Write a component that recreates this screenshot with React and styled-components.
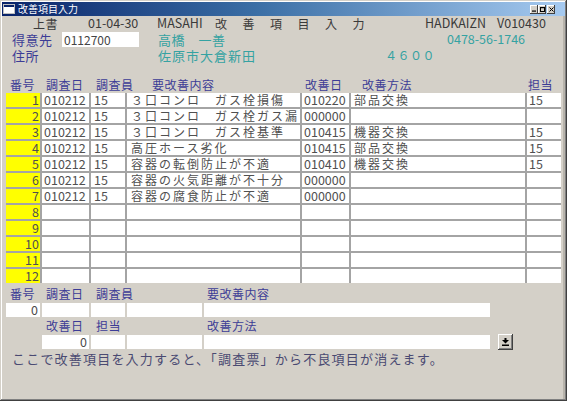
import React from 'react'
import styled, { createGlobalStyle } from 'styled-components'

const GlobalStyle = createGlobalStyle`
  html, body {
    margin: 0;
    padding: 0;
    background: #d4d0c8;
  }
  body {
    font-family: "Noto Sans CJK JP", "Noto Sans", sans-serif;
  }
`

const Window = styled.div`
  width: 567px;
  height: 401px;
  box-sizing: border-box;
  padding: 2px;
  background: #d4d0c8;
  box-shadow: inset -1px -1px #404040, inset 1px 1px #d4d0c8,
    inset -2px -2px #808080, inset 2px 2px #ffffff,
    inset -4px 0 #b8b4ac;
  display: flex;
  flex-direction: column;
  overflow: hidden;
`

const TitleBar = styled.div`
  height: 14px;
  display: flex;
  align-items: center;
  padding: 0 2px 0 1px;
  background: linear-gradient(to right, #0a246a, #3a6ea5 45%, #a6caf0);
`

const TitleText = styled.span`
  color: #fff;
  font-size: 10px;
  line-height: 14px;
  margin-left: 3px;
  flex: 1;
`

const Controls = styled.div`
  display: flex;
  margin-right: 8px;
`

const CtrlButton = styled.div`
  width: 8px;
  height: 9px;
  background: #d4d0c8;
  box-shadow: inset -1px -1px #404040, inset 1px 1px #fff;
  display: flex;
  align-items: center;
  justify-content: center;
  margin-left: ${p => (p.$gap ? 1 : 0)}px;
`

const Body = styled.div`
  padding-left: 4px;
  display: flex;
  flex-direction: column;
`

const HeaderRow = styled.div`
  height: ${p => p.$h}px;
  display: flex;
  align-items: center;
  padding-left: ${p => p.$pl || 0}px;
`

const tones = {
  dark: '#3a3a3a',
  label: '#3c3c96',
  teal: '#35a2a2',
}

const Item = styled.span`
  flex: 0 0 ${p => (p.$w ? `${p.$w}px` : 'auto')};
  color: ${p => tones[p.$tone || 'dark']};
  font-size: ${p => p.$size || 12}px;
  letter-spacing: ${p => p.$ls || 0}px;
  white-space: nowrap;
  line-height: 1;
`

const CodeBox = styled.div`
  flex: 0 0 77px;
  height: 15px;
  margin-right: 19px;
  background: #fff;
  color: #444;
  font-size: 12px;
  line-height: 15px;
  padding-left: 2px;
  box-sizing: border-box;
`

const cols = '34px 47px 34px 173px 47px 174px 34px'

const GridHead = styled.div`
  display: grid;
  grid-template-columns: ${cols};
  column-gap: 2px;
  height: 14px;
  margin-top: 15px;
  align-items: center;
`

const HeadLabel = styled.span`
  color: #3c3c96;
  font-size: 12px;
  letter-spacing: 0.5px;
  line-height: 1;
  padding-left: ${p => p.$pl || 0}px;
  white-space: nowrap;
`

const Grid = styled.div`
  display: grid;
  grid-template-columns: ${cols};
  grid-auto-rows: 14px;
  gap: 2px;
  background: #a4a4a4;
  width: 555px;
  margin-top: 1px;
`

const Cell = styled.div`
  background: ${p => (p.$num ? '#ffff00' : '#ffffff')};
  color: #505050;
  font-size: ${p => (p.$wide ? 12 : 12.5)}px;
  letter-spacing: ${p => (p.$wide ? 2 : 0)}px;
  line-height: 14px;
  text-align: ${p => (p.$num ? 'right' : 'left')};
  padding: 0 ${p => (p.$num ? 1 : 0)}px 0 ${p => p.$pl ?? 2}px;
  white-space: nowrap;
`

const editCols = '34px 47px 34px 75px 286px 22px'

const EditLabels = styled.div`
  display: grid;
  grid-template-columns: ${editCols};
  column-gap: 2px;
  height: 14px;
  align-items: center;
  margin-top: ${p => p.$mt}px;
`

const EditRow = styled.div`
  display: grid;
  grid-template-columns: ${editCols};
  column-gap: 2px;
  height: 14px;
  margin-top: ${p => p.$mt}px;
  align-items: center;
`

const Field = styled.div`
  height: 14px;
  background: ${p => (p.$blank ? 'transparent' : '#fff')};
  color: #4a4a4a;
  font-size: 12.5px;
  line-height: 14px;
  text-align: ${p => (p.$right ? 'right' : 'left')};
  padding-right: 2px;
  box-sizing: border-box;
`

const DropButton = styled.div`
  width: 15px;
  height: 16px;
  margin-left: 6px;
  background: #d4d0c8;
  box-shadow: inset -1px -1px #404040, inset 1px 1px #fff, inset -2px -2px #808080;
  display: flex;
  align-items: center;
  justify-content: center;
`

const Message = styled.div`
  margin-top: 4px;
  padding-left: 6px;
  height: 14px;
  color: #4a4a72;
  font-size: 13px;
  letter-spacing: 1.2px;
  line-height: 14px;
  white-space: nowrap;
`

const rows = [
  ['1', '010212', '15', '３口コンロ　ガス栓損傷', '010220', '部品交換', '15'],
  ['2', '010212', '15', '３口コンロ　ガス栓ガス漏', '000000', '', ''],
  ['3', '010212', '15', '３口コンロ　ガス栓基準', '010415', '機器交換', '15'],
  ['4', '010212', '15', '高圧ホース劣化', '010415', '部品交換', '15'],
  ['5', '010212', '15', '容器の転倒防止が不適', '010410', '機器交換', '15'],
  ['6', '010212', '15', '容器の火気距離が不十分', '000000', '', ''],
  ['7', '010212', '15', '容器の腐食防止が不適', '000000', '', ''],
  ['8', '', '', '', '', '', ''],
  ['9', '', '', '', '', '', ''],
  ['10', '', '', '', '', '', ''],
  ['11', '', '', '', '', '', ''],
  ['12', '', '', '', '', '', ''],
]

function WindowIcon() {
  return (
    <svg width="12" height="10" viewBox="0 0 12 10">
      <rect x="0.5" y="0.5" width="11" height="9" fill="#fff" stroke="#c0c0c0" />
      <rect x="1" y="1" width="10" height="2" fill="#0a246a" />
    </svg>
  )
}

function DownloadGlyph() {
  return (
    <svg width="7" height="8" viewBox="0 0 7 8">
      <rect x="2.5" y="0" width="2" height="2" fill="#000" />
      <polygon points="0,2 7,2 3.5,5.5" fill="#000" />
      <rect x="0" y="6.5" width="7" height="1.5" fill="#000" />
    </svg>
  )
}

export default function App() {
  return (
    <>
      <GlobalStyle />
      <Window>
        <TitleBar>
          <WindowIcon />
          <TitleText>改善項目入力</TitleText>
          <Controls>
            <CtrlButton>
              <svg width="4" height="5" viewBox="0 0 4 5"><rect x="0" y="3.5" width="4" height="1.2" fill="#000" /></svg>
            </CtrlButton>
            <CtrlButton>
              <svg width="5" height="5" viewBox="0 0 5 5"><rect x="0.5" y="0.5" width="4" height="4" fill="none" stroke="#000" /><rect x="0" y="0" width="5" height="1.2" fill="#000" /></svg>
            </CtrlButton>
            <CtrlButton $gap>
              <svg width="5" height="5" viewBox="0 0 5 5"><path d="M0.5 0.5 L4.5 4.5 M4.5 0.5 L0.5 4.5" stroke="#000" strokeWidth="1" /></svg>
            </CtrlButton>
          </Controls>
        </TitleBar>
        <Body>
          <HeaderRow $h={15} $pl={27}>
            <Item $w={55} $size={12} $ls={0.5}>上書</Item>
            <Item $w={69} $size={12.5}>01-04-30</Item>
            <Item $w={58} $size={12.5}>MASAHI</Item>
            <Item $w={210} $size={12} $ls={15.5}>改善項目入力</Item>
            <Item $w={72} $size={12.5}>HADKAIZN</Item>
            <Item $size={12.5}>V010430</Item>
          </HeaderRow>
          <HeaderRow $h={16} $pl={6}>
            <Item $w={50} $tone="label" $size={13} $ls={0.5}>得意先</Item>
            <CodeBox>0112700</CodeBox>
            <Item $w={289} $tone="teal" $size={13} $ls={0.5}>高橋　一善</Item>
            <Item $tone="teal" $size={12.5}>0478-56-1746</Item>
          </HeaderRow>
          <HeaderRow $h={16} $pl={6}>
            <Item $w={146} $tone="label" $size={13} $ls={0.5}>住所</Item>
            <Item $w={227} $tone="teal" $size={13} $ls={1}>佐原市大倉新田</Item>
            <Item $tone="teal" $size={12} $ls={0.5}>４６００</Item>
          </HeaderRow>

          <GridHead>
            <HeadLabel $pl={4}>番号</HeadLabel>
            <HeadLabel $pl={4}>調査日</HeadLabel>
            <HeadLabel $pl={5}>調査員</HeadLabel>
            <HeadLabel $pl={25}>要改善内容</HeadLabel>
            <HeadLabel $pl={3}>改善日</HeadLabel>
            <HeadLabel $pl={11}>改善方法</HeadLabel>
            <HeadLabel $pl={1}>担当</HeadLabel>
          </GridHead>
          <Grid>
            {rows.map(r => (
              <React.Fragment key={r[0]}>
                <Cell $num>{r[0]}</Cell>
                <Cell>{r[1]}</Cell>
                <Cell $pl={3}>{r[2]}</Cell>
                <Cell $wide $pl={4}>{r[3]}</Cell>
                <Cell>{r[4]}</Cell>
                <Cell $wide $pl={3}>{r[5]}</Cell>
                <Cell>{r[6]}</Cell>
              </React.Fragment>
            ))}
          </Grid>

          <EditLabels $mt={4}>
            <HeadLabel $pl={4}>番号</HeadLabel>
            <HeadLabel $pl={4}>調査日</HeadLabel>
            <HeadLabel $pl={5}>調査員</HeadLabel>
            <span />
            <HeadLabel $pl={3}>要改善内容</HeadLabel>
          </EditLabels>
          <EditRow $mt={2}>
            <Field $right>0</Field>
            <Field />
            <Field />
            <Field />
            <Field />
          </EditRow>
          <EditLabels $mt={2}>
            <span />
            <HeadLabel $pl={4}>改善日</HeadLabel>
            <HeadLabel $pl={5}>担当</HeadLabel>
            <span />
            <HeadLabel $pl={3}>改善方法</HeadLabel>
          </EditLabels>
          <EditRow $mt={1}>
            <Field $blank />
            <Field $right>0</Field>
            <Field />
            <Field />
            <Field />
            <DropButton><DownloadGlyph /></DropButton>
          </EditRow>
          <Message>ここで改善項目を入力すると、「調査票」から不良項目が消えます。</Message>
        </Body>
      </Window>
    </>
  )
}
